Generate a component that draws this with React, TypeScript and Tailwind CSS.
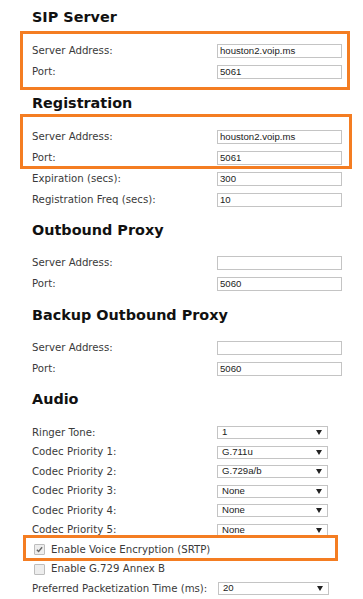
import React from 'react';

const label = 'w-[185px] shrink-0 text-[10.2px] text-[#3a3a3a]';
const field =
  'h-[14px] w-[125px] border border-[#c4c4c4] bg-white pl-[2px] text-[9.6px] leading-[12px] text-[#222] font-["Liberation_Sans",Arial,sans-serif]';

function Heading({ children }: { children: React.ReactNode }) {
  return (
    <h2 className="mt-[10px] h-[20px] text-[14.4px] leading-[20px] font-bold text-[#111]">
      {children}
    </h2>
  );
}

function TextRow({ name, value }: { name: string; value: string }) {
  return (
    <div className="flex h-[21px] items-center">
      <span className={label}>{name}</span>
      <div className={field}>{value}</div>
    </div>
  );
}

function SelectRow({ name, value, w = 'w-[185px]' }: { name: string; value: string; w?: string }) {
  return (
    <div className="flex h-[19.5px] items-center">
      <span className={`${w} shrink-0 text-[10.2px] text-[#3a3a3a]`}>{name}</span>
      <div className="flex h-[13px] w-[111px] items-center justify-between border border-[#c4c4c4] bg-white pr-[5px] pl-[4px] font-['Liberation_Sans',Arial,sans-serif] text-[9.6px] text-[#222]">
        <span>{value}</span>
        <svg width="6" height="5" viewBox="0 0 6 5">
          <path d="M0 0h6L3 5z" fill="#222" />
        </svg>
      </div>
    </div>
  );
}

function CheckRow({ text, checked }: { text: string; checked?: boolean }) {
  return (
    <div className="flex h-[19.5px] items-center">
      <span className="mr-[6px] ml-[2px] flex h-[11px] w-[11px] items-center justify-center rounded-[1px] border border-[#bdbdbd] bg-[#ededed]">
        {checked && (
          <svg width="7" height="7" viewBox="0 0 8 8">
            <path d="M1 4.2l2 2L7 1.5" stroke="#666" strokeWidth="1.6" fill="none" />
          </svg>
        )}
      </span>
      <span className="text-[10.2px] text-[#3a3a3a]">{text}</span>
    </div>
  );
}

// orange annotation rectangles drawn over the form
function Mark({ className }: { className: string }) {
  return <span className={`pointer-events-none absolute border-[3px] border-[#f47d22] ${className}`} />;
}

export default function App() {
  return (
    <div className="h-[599px] w-[363px] overflow-hidden bg-white pl-[32px] font-['DejaVu_Sans',Verdana,sans-serif]">
      <div className="-mt-[3px]">
        <Heading>SIP Server</Heading>
        <div className="relative mt-[13.5px] w-[310px]">
          <Mark className="-top-[9.5px] -right-[8px] -bottom-[7.5px] -left-[12px]" />
          <TextRow name="Server Address:" value="houston2.voip.ms" />
          <TextRow name="Port:" value="5061" />
        </div>

        <Heading>Registration</Heading>
        <div className="mt-[13.5px] w-[310px]">
          <div className="relative">
            <Mark className="-top-[12.5px] -right-[10px] -bottom-[0.5px] -left-[12px]" />
            <TextRow name="Server Address:" value="houston2.voip.ms" />
            <TextRow name="Port:" value="5061" />
          </div>
          <TextRow name="Expiration (secs):" value="300" />
          <TextRow name="Registration Freq (secs):" value="10" />
        </div>

        <Heading>Outbound Proxy</Heading>
        <div className="mt-[12.5px] w-[310px]">
          <TextRow name="Server Address:" value="" />
          <TextRow name="Port:" value="5060" />
        </div>

        <Heading>Backup Outbound Proxy</Heading>
        <div className="mt-[12.5px] w-[310px]">
          <TextRow name="Server Address:" value="" />
          <TextRow name="Port:" value="5060" />
        </div>

        <Heading>Audio</Heading>
        <div className="mt-[13.75px] w-[310px]">
          <SelectRow name="Ringer Tone:" value="1" />
          <SelectRow name="Codec Priority 1:" value="G.711u" />
          <SelectRow name="Codec Priority 2:" value="G.729a/b" />
          <SelectRow name="Codec Priority 3:" value="None" />
          <SelectRow name="Codec Priority 4:" value="None" />
          <SelectRow name="Codec Priority 5:" value="None" />
          <div className="relative">
            <Mark className="-top-[4.75px] right-[4px] -bottom-[1.75px] -left-[9px]" />
            <CheckRow text="Enable Voice Encryption (SRTP)" checked />
          </div>
          <CheckRow text="Enable G.729 Annex B" />
          <SelectRow name="Preferred Packetization Time (ms):" value="20" w="w-[186px]" />
        </div>
      </div>
    </div>
  );
}
